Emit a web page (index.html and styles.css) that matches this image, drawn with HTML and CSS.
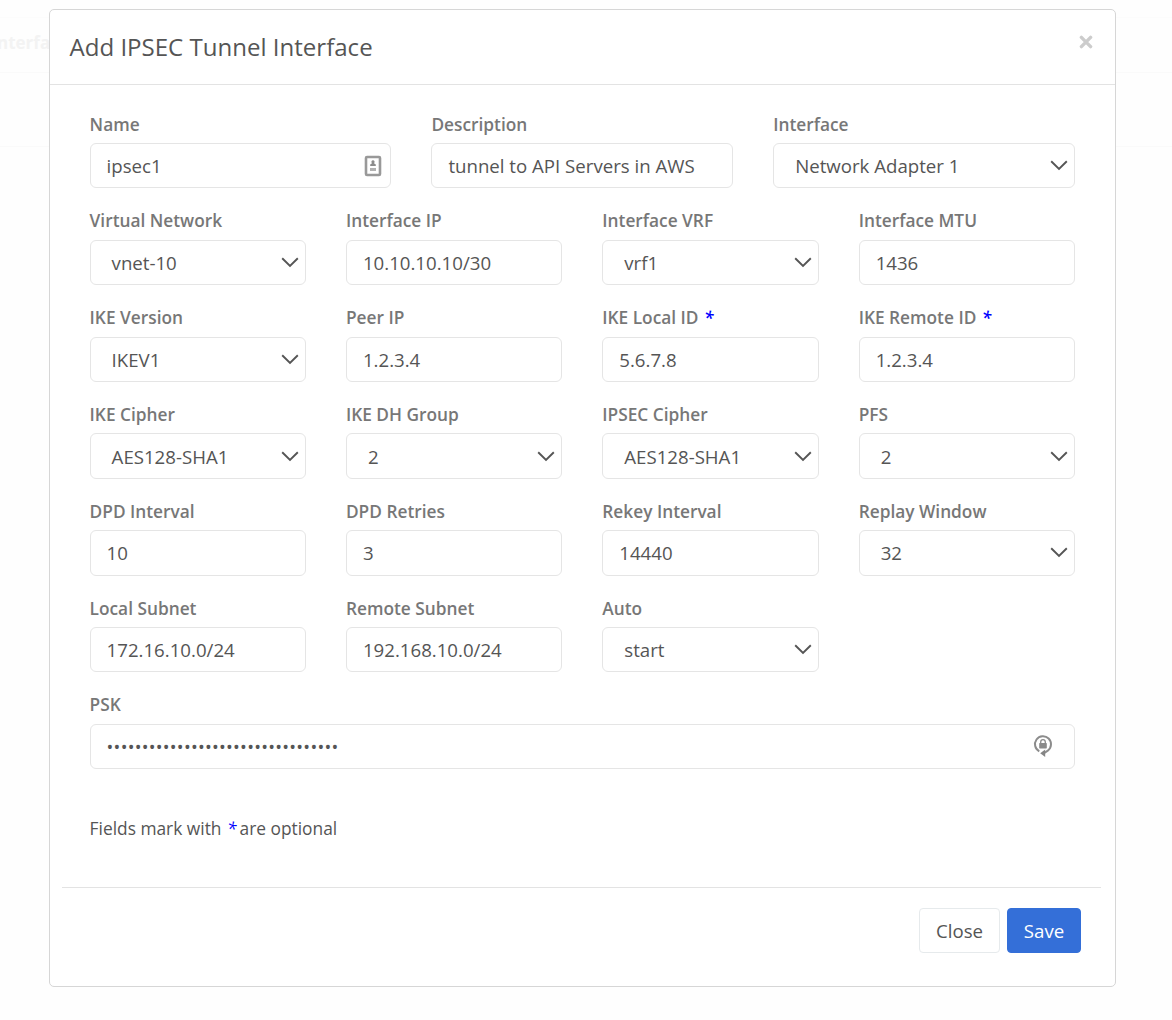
FILE: index.html
```html
<!DOCTYPE html>
<html lang="en">
<head>
<meta charset="utf-8">
<title>Add IPSEC Tunnel Interface</title>
<link rel="stylesheet" href="styles.css">
</head>
<body>
<svg class="defs" aria-hidden="true">
  <symbol id="chevron" viewBox="0 0 18 11"><path d="M1.2 1.3 9 9 16.8 1.3" fill="none" stroke="#555" stroke-width="1.9"/></symbol>
</svg>
<div class="backdrop"><div class="ghost-row ghost-head">nterfa</div><div class="ghost-row"></div></div>
<main class="modal">
  <header class="modal-head">
    <h1 class="title">Add IPSEC Tunnel Interface</h1>
    <svg class="dismiss" viewBox="0 0 14 14"><path d="M2.4 2.4 11.6 11.6M11.6 2.4 2.4 11.6" stroke="#ccc" stroke-width="3.4" stroke-linecap="round"/></svg>
  </header>
  <form class="form">
    <div class="row thirds">
      <div class="field"><label class="label">Name</label><div class="control"><span class="value">ipsec1</span>
        <svg class="contact" viewBox="0 0 18 22"><rect x="2" y="2" width="14" height="18" rx="1" fill="#fff" stroke="#999" stroke-width="2.6"/><path d="M9 5.200a1.700 1.700 0 0 1 1 3l1.800 1.200v1.700H6.200V9.400L8 8.200a1.700 1.700 0 0 1 1-3z" fill="#8c8c8c"/><path d="M6 14.500h6" stroke="#b2b2b2" stroke-width="3"/></svg></div></div>
      <div class="field"><label class="label">Description</label><div class="control"><span class="value">tunnel to API Servers in AWS</span></div></div>
      <div class="field"><label class="label">Interface</label><div class="control select"><span class="value">Network Adapter 1</span><svg class="chevron"><use href="#chevron"/></svg></div></div>
    </div>
    <div class="row">
      <div class="field"><label class="label">Virtual Network</label><div class="control select"><span class="value">vnet-10</span><svg class="chevron"><use href="#chevron"/></svg></div></div>
      <div class="field"><label class="label">Interface IP</label><div class="control"><span class="value">10.10.10.10/30</span></div></div>
      <div class="field"><label class="label">Interface VRF</label><div class="control select"><span class="value">vrf1</span><svg class="chevron"><use href="#chevron"/></svg></div></div>
      <div class="field"><label class="label">Interface MTU</label><div class="control"><span class="value">1436</span></div></div>
    </div>
    <div class="row">
      <div class="field"><label class="label">IKE Version</label><div class="control select"><span class="value">IKEV1</span><svg class="chevron"><use href="#chevron"/></svg></div></div>
      <div class="field"><label class="label">Peer IP</label><div class="control"><span class="value">1.2.3.4</span></div></div>
      <div class="field"><label class="label">IKE Local ID <i class="star">*</i></label><div class="control"><span class="value">5.6.7.8</span></div></div>
      <div class="field"><label class="label">IKE Remote ID <i class="star">*</i></label><div class="control"><span class="value">1.2.3.4</span></div></div>
    </div>
    <div class="row">
      <div class="field"><label class="label">IKE Cipher</label><div class="control select"><span class="value">AES128-SHA1</span><svg class="chevron"><use href="#chevron"/></svg></div></div>
      <div class="field"><label class="label">IKE DH Group</label><div class="control select"><span class="value">2</span><svg class="chevron"><use href="#chevron"/></svg></div></div>
      <div class="field"><label class="label">IPSEC Cipher</label><div class="control select"><span class="value">AES128-SHA1</span><svg class="chevron"><use href="#chevron"/></svg></div></div>
      <div class="field"><label class="label">PFS</label><div class="control select"><span class="value">2</span><svg class="chevron"><use href="#chevron"/></svg></div></div>
    </div>
    <div class="row">
      <div class="field"><label class="label">DPD Interval</label><div class="control"><span class="value">10</span></div></div>
      <div class="field"><label class="label">DPD Retries</label><div class="control"><span class="value">3</span></div></div>
      <div class="field"><label class="label">Rekey Interval</label><div class="control"><span class="value">14440</span></div></div>
      <div class="field"><label class="label">Replay Window</label><div class="control select"><span class="value">32</span><svg class="chevron"><use href="#chevron"/></svg></div></div>
    </div>
    <div class="row">
      <div class="field"><label class="label">Local Subnet</label><div class="control"><span class="value">172.16.10.0/24</span></div></div>
      <div class="field"><label class="label">Remote Subnet</label><div class="control"><span class="value">192.168.10.0/24</span></div></div>
      <div class="field"><label class="label">Auto</label><div class="control select"><span class="value">start</span><svg class="chevron"><use href="#chevron"/></svg></div></div>
    </div>
    <div class="row full">
      <div class="field"><label class="label">PSK</label><div class="control psk"><span class="value dots">•••••••••••••••••••••••••••••••••</span>
        <svg class="lock" viewBox="0 0 20 24"><path d="M6.300 17.300A8 8 0 1 1 14.800 16.600L11 19.300" fill="none" stroke="#8c8c8c" stroke-width="2"/><path d="M12.200 15.400v7.600L7.200 19.200z" fill="#858585"/><rect x="6.200" y="9" width="7.600" height="5.400" rx=".6" fill="#8a8a8a"/><path d="M7.700 9.500V7.900a2.300 2.300 0 0 1 4.600 0v1.600" fill="none" stroke="#8a8a8a" stroke-width="1.300"/></svg></div></div>
    </div>
    <p class="note">Fields mark with <i class="star">*</i>are optional</p>
  </form>
  <footer class="actions"><button class="btn" type="button">Close</button><button class="btn save" type="button">Save</button></footer>
</main>
</body>
</html>
```
FILE: styles.css
```css
* { box-sizing: border-box; }
body {
  margin: 0;
  height: 1020px;
  overflow: hidden;
  background: #fefefe;
  color: #555;
  font-family: "Open Sans", "Noto Sans", sans-serif;
}
.defs { position: absolute; width: 0; height: 0; }
.backdrop { position: absolute; z-index: -1; top: 17px; left: 0; width: 100%; }
.ghost-row { height: 74px; border-bottom: 1px solid #fafafa; }
.ghost-head { height: 56px; border-top: 1px solid #fcfcfc; padding-top: 13px; font-size: 17px; font-weight: 700; line-height: 24px; color: #f3f3f3; text-indent: -3px; }
.modal {
  width: 1067px;
  height: 978px;
  margin: 9px 0 0 49px;
  background: #fff;
  border: 1px solid #d6d6d6;
  border-radius: 5px;
}
.modal-head {
  display: flex;
  justify-content: space-between;
  height: 75px;
  padding: 19px 22px 0 19.500px;
  border-bottom: 1px solid #e3e3e3;
}
.title { margin: 0; font-size: 24.050px; font-weight: 400; line-height: 36px; white-space: nowrap; }
.dismiss { width: 14px; height: 14px; margin-top: 6px; }
.form { padding: 26.600px 40px 0 39.600px; }
.row { display: grid; grid-template-columns: repeat(4, 1fr); gap: 40px; height: 96.800px; }
.thirds { grid-template-columns: repeat(3, 1fr); }
.full { grid-template-columns: 1fr; }
.field { min-width: 0; }
.label { display: block; height: 31.500px; font-size: 17.300px; font-weight: 600; line-height: 26px; color: #777; white-space: nowrap; }
.star { margin-left: 1px; color: #00f; }
.control {
  display: flex;
  align-items: center;
  justify-content: space-between;
  height: 45.400px;
  padding: 0 8px 0 16px;
  border: 1px solid #e5e5e5;
  border-radius: 6px;
  font-size: 18.650px;
  white-space: nowrap;
}
.value { padding-top: 1px; line-height: 28px; }
.select { padding: 0 6px 0 21px; }
.chevron { width: 18px; height: 11px; }
.contact { width: 18px; height: 22px; }
.psk { padding-right: 21px; }
.dots { padding: 1px 0 0; font-size: 18px; letter-spacing: .26px; }
.lock { width: 20px; height: 24px; margin-bottom: 1px; }
.note { margin: 26px 0 0; font-size: 17.350px; line-height: 26px; }
.note .star { margin-right: 3px; }
.actions {
  display: flex;
  justify-content: flex-end;
  gap: 7px;
  margin: 46px 14px 0 12px;
  padding: 20px 20px 0 0;
  border-top: 1px solid #e3e3e3;
}
.btn {
  width: 81px;
  height: 45px;
  padding: 0;
  border: 1px solid #e6eaec;
  border-radius: 4px;
  background: #fff;
  color: #555;
  font: 400 18.650px/28px "Open Sans", "Noto Sans", sans-serif;
}
.save { width: 74px; border-color: #346fd8; background: #346fd8; color: #fff; }
```
